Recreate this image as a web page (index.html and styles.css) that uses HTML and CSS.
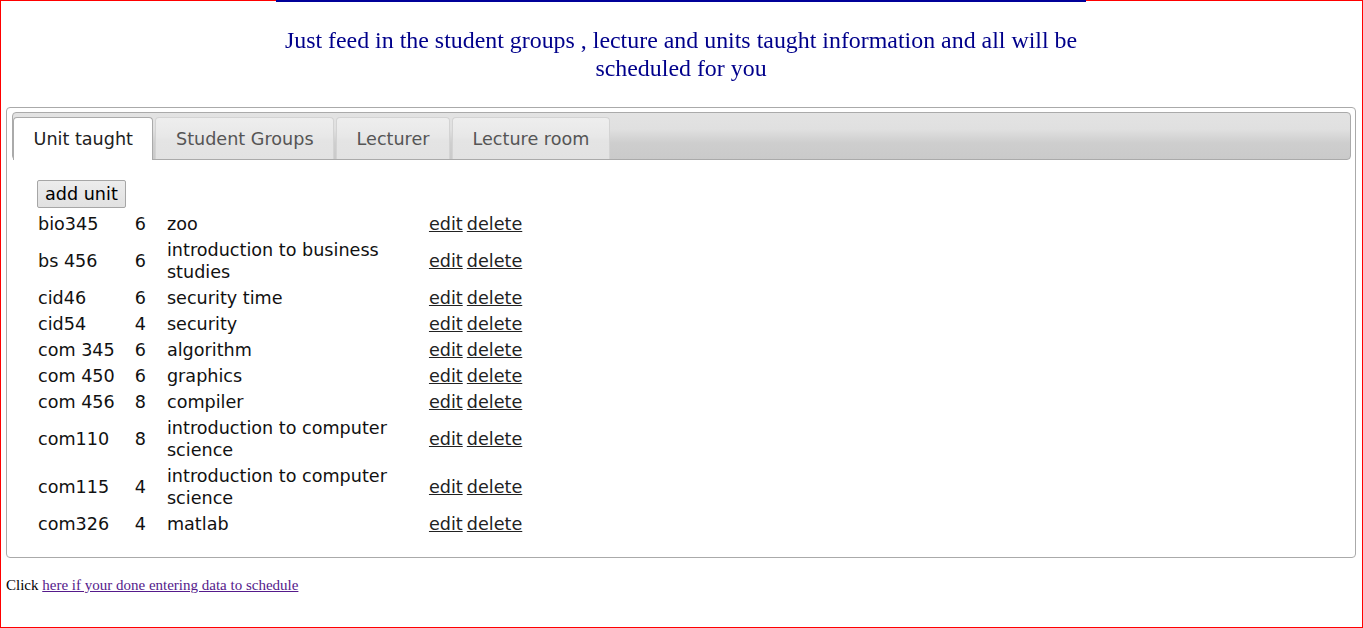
FILE: index.html
```html
<!DOCTYPE html>
<html lang="en">
<head>
<meta charset="utf-8">
<title>Timetable scheduler</title>
<link rel="stylesheet" href="styles.css">
</head>
<body>
<div class="frame"></div>
<div class="page">
  <div class="banner">
    <p class="tagline">Just feed in the student groups , lecture and units taught information and all will be scheduled for you</p>
  </div>
  <div class="tabs">
    <ul class="tab-nav">
      <li class="tab active"><a href="#units">Unit taught</a></li>
      <li class="tab"><a href="#groups">Student Groups</a></li>
      <li class="tab"><a href="#lecturer">Lecturer</a></li>
      <li class="tab"><a href="#rooms">Lecture room</a></li>
    </ul>
    <div class="panel" id="units">
      <div class="toolbar"><button class="btn" type="button">add unit</button></div>
      <table class="units">
        <tr><td class="code">bio345</td><td>6</td><td class="name">zoo</td><td class="actions"><a href="#">edit</a> <a href="#">delete</a></td></tr>
        <tr><td class="code">bs 456</td><td>6</td><td class="name">introduction to business studies</td><td class="actions"><a href="#">edit</a> <a href="#">delete</a></td></tr>
        <tr><td class="code">cid46</td><td>6</td><td class="name">security time</td><td class="actions"><a href="#">edit</a> <a href="#">delete</a></td></tr>
        <tr><td class="code">cid54</td><td>4</td><td class="name">security</td><td class="actions"><a href="#">edit</a> <a href="#">delete</a></td></tr>
        <tr><td class="code">com 345</td><td>6</td><td class="name">algorithm</td><td class="actions"><a href="#">edit</a> <a href="#">delete</a></td></tr>
        <tr><td class="code">com 450</td><td>6</td><td class="name">graphics</td><td class="actions"><a href="#">edit</a> <a href="#">delete</a></td></tr>
        <tr><td class="code">com 456</td><td>8</td><td class="name">compiler</td><td class="actions"><a href="#">edit</a> <a href="#">delete</a></td></tr>
        <tr><td class="code">com110</td><td>8</td><td class="name">introduction to computer science</td><td class="actions"><a href="#">edit</a> <a href="#">delete</a></td></tr>
        <tr><td class="code">com115</td><td>4</td><td class="name">introduction to computer science</td><td class="actions"><a href="#">edit</a> <a href="#">delete</a></td></tr>
        <tr><td class="code">com326</td><td>4</td><td class="name">matlab</td><td class="actions"><a href="#">edit</a> <a href="#">delete</a></td></tr>
      </table>
    </div>
  </div>
  <p class="footer">Click <a href="#">here if your done entering data to schedule</a></p>
</div>
</body>
</html>
```
FILE: styles.css
```css
html, body {
  margin: 0;
  padding: 0;
  background: #fff;
}

body {
  font-family: "Liberation Serif", "Times New Roman", serif;
  font-size: 16px;
  color: #000;
}

.frame {
  position: fixed;
  inset: 0;
  border: 1px solid #ff0000;
  pointer-events: none;
  z-index: 5;
}

.page {
  padding: 0 7px 0 6px;
}

.banner {
  width: 810px;
  margin: 0 auto;
  border-top: 2px solid #000099;
  position: relative;
  z-index: 6;
}

.tagline {
  margin: 24px 0 0;
  font-family: "Liberation Serif", "Times New Roman", serif;
  font-size: 23.9px;
  line-height: 28px;
  color: #00008b;
  text-align: center;
}

.tabs {
  margin-top: 25px;
  border: 1px solid #aaaaaa;
  border-radius: 4px;
  background: #fff;
  padding: 4px 4px 4px 5px;
  font-family: "DejaVu Sans", Verdana, sans-serif;
  font-size: 17.6px;
  color: #222222;
}

.tab-nav {
  list-style: none;
  margin: 0;
  padding: 4px 4px 0 0;
  display: flex;
  align-items: flex-end;
  gap: 2px;
  border: 1px solid #aaaaaa;
  border-radius: 4px;
  background: linear-gradient(#e3e3e3, #e0e0e0 35%, #cecece 65%, #cacaca);
}

.tab {
  height: 41px;
  border: 1px solid #d3d3d3;
  border-bottom: 0;
  border-radius: 4px 4px 0 0;
  background: linear-gradient(#eeeeee, #e8e8e8 45%, #e4e4e4 55%, #e2e2e2);
  display: flex;
  align-items: center;
}

.tab a {
  display: block;
  padding: 0 19.5px;
  line-height: 22px;
  color: #555555;
  text-decoration: none;
}

.tab.active {
  height: 42px;
  margin-bottom: -1px;
  border-color: #aaaaaa;
  background: #fff;
}

.tab.active a {
  color: #212121;
  padding-bottom: 1px;
}

.panel {
  padding: 20px 25px 16px 25px;
}

.toolbar {
  margin-bottom: 3px;
}

.btn {
  font-family: "DejaVu Sans", Verdana, sans-serif;
  font-size: 17.6px;
  line-height: 22px;
  padding: 2px 7px;
  margin: 0;
  border: 1px solid #a6a6a6;
  border-radius: 2px;
  background: linear-gradient(#ececec, #e1e1e1);
  color: #000;
}

.units {
  border-collapse: collapse;
  line-height: 22px;
  color: #111;
}

.units td {
  padding: 2px 20px 2px 1px;
  vertical-align: middle;
}

.units td:first-child {
  padding-right: 19px;
}

.units td.name {
  width: 242px;
  padding-right: 19px;
}

.units td.actions {
  word-spacing: -1.5px;
}

.units a {
  color: #222222;
  text-decoration: underline;
}

.footer {
  margin: 19px 0 0;
  font-size: 15px;
}

.footer a {
  color: #551a8b;
}
```
